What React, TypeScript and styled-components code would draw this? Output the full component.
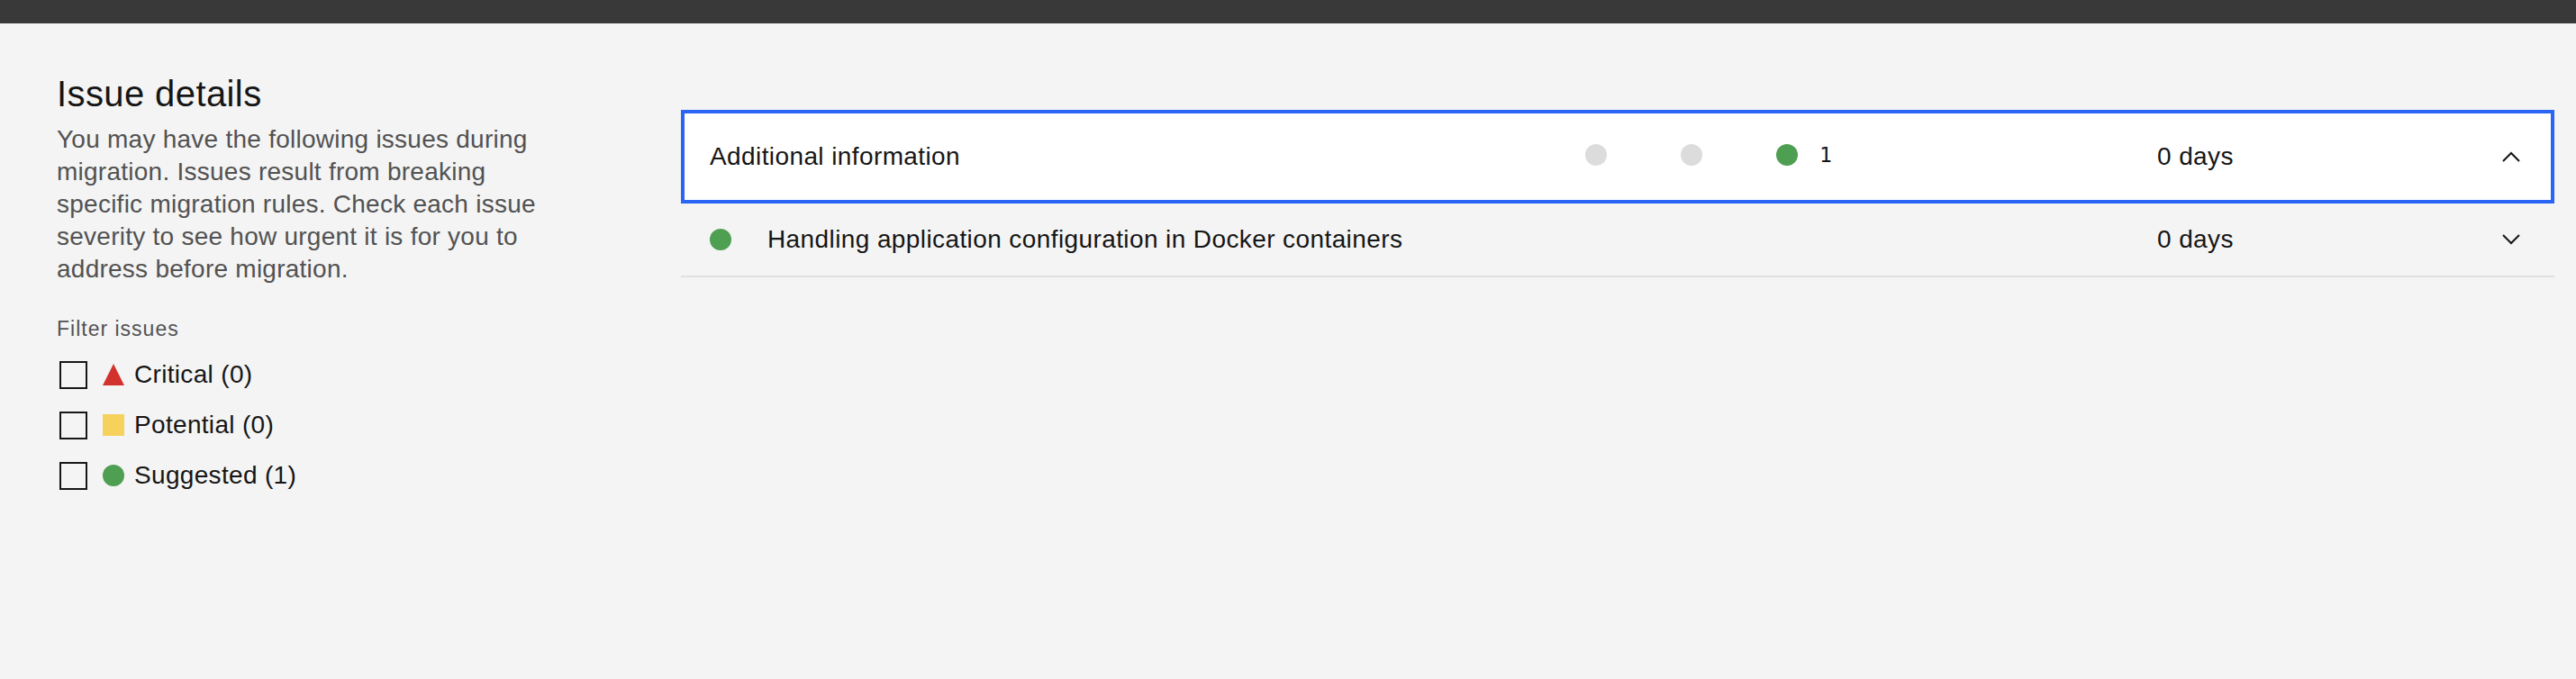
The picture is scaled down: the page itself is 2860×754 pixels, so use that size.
import React from 'react';
import styled, { createGlobalStyle } from 'styled-components';

const GlobalStyle = createGlobalStyle`
    html, body {
        margin: 0;
        padding: 0;
        background: #f4f4f4;
    }
    body {
        font-family: "Liberation Sans", Arial, sans-serif;
        color: #161616;
    }
`;

const filters = [
    { key: 'critical', label: 'Critical', count: 0 },
    { key: 'potential', label: 'Potential', count: 0 },
    { key: 'suggested', label: 'Suggested', count: 1 },
];

const issues = [
    {
        title: 'Additional information',
        summary: true,
        counts: [null, null, 1],
        effort: '0 days',
        open: true,
    },
    {
        title: 'Handling application configuration in Docker containers',
        summary: false,
        severity: 'suggested',
        effort: '0 days',
        open: false,
    },
];

const SeverityIcon = ({ kind }: { kind: string }) => {
    if (kind === 'critical') {
        return (
            <IconSvg viewBox="0 0 24 24">
                <polygon points="12,0 24,24 0,24" fill="#d2322d" />
            </IconSvg>
        );
    }
    if (kind === 'potential') {
        return (
            <IconSvg viewBox="0 0 24 24">
                <rect width="24" height="24" fill="#f6d25c" />
            </IconSvg>
        );
    }
    return <Dot color="#4e9f52" />;
};

const Chevron = ({ up }: { up: boolean }) => (
    <ChevronSvg viewBox="0 0 20 12">
        <path
            d={up ? 'M1 11 L10 2 L19 11' : 'M1 1 L10 10 L19 1'}
            fill="none"
            stroke="#161616"
            strokeWidth="2"
        />
    </ChevronSvg>
);

const App = () => {
    return (
        <>
            <GlobalStyle />
            <Page>
                <TopBar />
                <Main>
                    <Sidebar>
                        <Heading>Issue details</Heading>
                        <Description>
                            You may have the following issues during migration. Issues result from breaking
                            specific migration rules. Check each issue severity to see how urgent it is for
                            you to address before migration.
                        </Description>
                        <FilterLabel>Filter issues</FilterLabel>
                        <FilterList>
                            {filters.map((f) => (
                                <FilterRow key={f.key}>
                                    <CheckBox />
                                    <SeverityIcon kind={f.key} />
                                    <FilterText>
                                        {f.label} ({f.count})
                                    </FilterText>
                                </FilterRow>
                            ))}
                        </FilterList>
                    </Sidebar>
                    <Content>
                        {issues.map((issue, index) => (
                            <IssueRow key={`issue-${index}`} active={issue.open}>
                                <Title>
                                    {!issue.summary && <Dot color="#4e9f52" />}
                                    <span>{issue.title}</span>
                                </Title>
                                <StatusGroup>
                                    {issue.summary &&
                                        issue.counts?.map((c, i) => (
                                            <Status key={`status-${i}`}>
                                                <Dot color={c ? '#4e9f52' : '#dcdcdc'} />
                                                {c && <Count>{c}</Count>}
                                            </Status>
                                        ))}
                                </StatusGroup>
                                <Effort>{issue.effort}</Effort>
                                <Chevron up={issue.open} />
                            </IssueRow>
                        ))}
                    </Content>
                </Main>
            </Page>
        </>
    );
};

export default App;

const Page = styled.div`
    min-height: 100vh;
    background: #f4f4f4;
`;

const TopBar = styled.div`
    height: 26px;
    background: #393939;
`;

const Main = styled.div`
    display: flex;
    gap: 123px;
    padding: 0 24px 0 63px;
`;

const Sidebar = styled.div`
    width: 570px;
    flex-shrink: 0;
    padding-top: 54px;
`;

const Heading = styled.h2`
    margin: 0;
    font-size: 40px;
    line-height: 48px;
    font-weight: 400;
    letter-spacing: 0.4px;
    color: #161616;
`;

const Description = styled.p`
    margin: 9px 0 0;
    font-size: 28px;
    line-height: 36px;
    letter-spacing: 0.25px;
    color: #525252;
`;

const FilterLabel = styled.div`
    margin-top: 33px;
    font-size: 23px;
    line-height: 30px;
    letter-spacing: 1px;
    color: #525252;
`;

const FilterList = styled.div`
    display: flex;
    flex-direction: column;
    margin-top: 8px;
`;

const FilterRow = styled.div`
    display: flex;
    align-items: center;
    height: 56px;
`;

const CheckBox = styled.span`
    box-sizing: border-box;
    width: 31px;
    height: 31px;
    margin-left: 3px;
    margin-right: 17px;
    border: 2px solid #161616;
    background: transparent;
    flex-shrink: 0;
`;

const IconSvg = styled.svg`
    width: 24px;
    height: 24px;
    flex-shrink: 0;
    display: block;
`;

const Dot = styled.span<{ color: string }>`
    display: inline-block;
    width: 24px;
    height: 24px;
    border-radius: 50%;
    background: ${({ color }) => color};
    flex-shrink: 0;
`;

const FilterText = styled.span`
    margin-left: 11px;
    font-size: 28px;
    line-height: 56px;
    letter-spacing: 0.32px;
    color: #161616;
`;

const Content = styled.div`
    flex: 1;
    padding-top: 96px;
`;

const IssueRow = styled.div<{ active: boolean }>`
    box-sizing: border-box;
    display: grid;
    grid-template-columns: minmax(0, 1fr) 635px 383px 20px;
    align-items: center;
    height: ${({ active }) => (active ? '104px' : '82px')};
    background: ${({ active }) => (active ? '#ffffff' : 'transparent')};
    border: ${({ active }) => (active ? '4px solid #2a65f5' : 'none')};
    border-bottom: ${({ active }) => (active ? '4px solid #2a65f5' : '2px solid #e0e0e0')};
    padding-left: ${({ active }) => (active ? '28px' : '32px')};
    padding-right: ${({ active }) => (active ? '34px' : '38px')};
    font-size: 28px;
    line-height: 36px;
    letter-spacing: 0.4px;
    color: #161616;
`;

const Title = styled.div`
    display: flex;
    align-items: center;
    gap: 40px;
    white-space: nowrap;
    overflow: hidden;
`;

const StatusGroup = styled.div`
    display: flex;
    align-items: center;
    height: 36px;
    margin-top: -4px;
`;

const Status = styled.div`
    display: flex;
    align-items: center;
    gap: 24px;
    width: 106px;
`;

const Count = styled.span`
    font-family: "DejaVu Sans Mono", "Liberation Mono", monospace;
    font-size: 23px;
    line-height: 24px;
    letter-spacing: 0;
`;

const Effort = styled.div`
    white-space: nowrap;
`;

const ChevronSvg = styled.svg`
    width: 20px;
    height: 12px;
    display: block;
`;
